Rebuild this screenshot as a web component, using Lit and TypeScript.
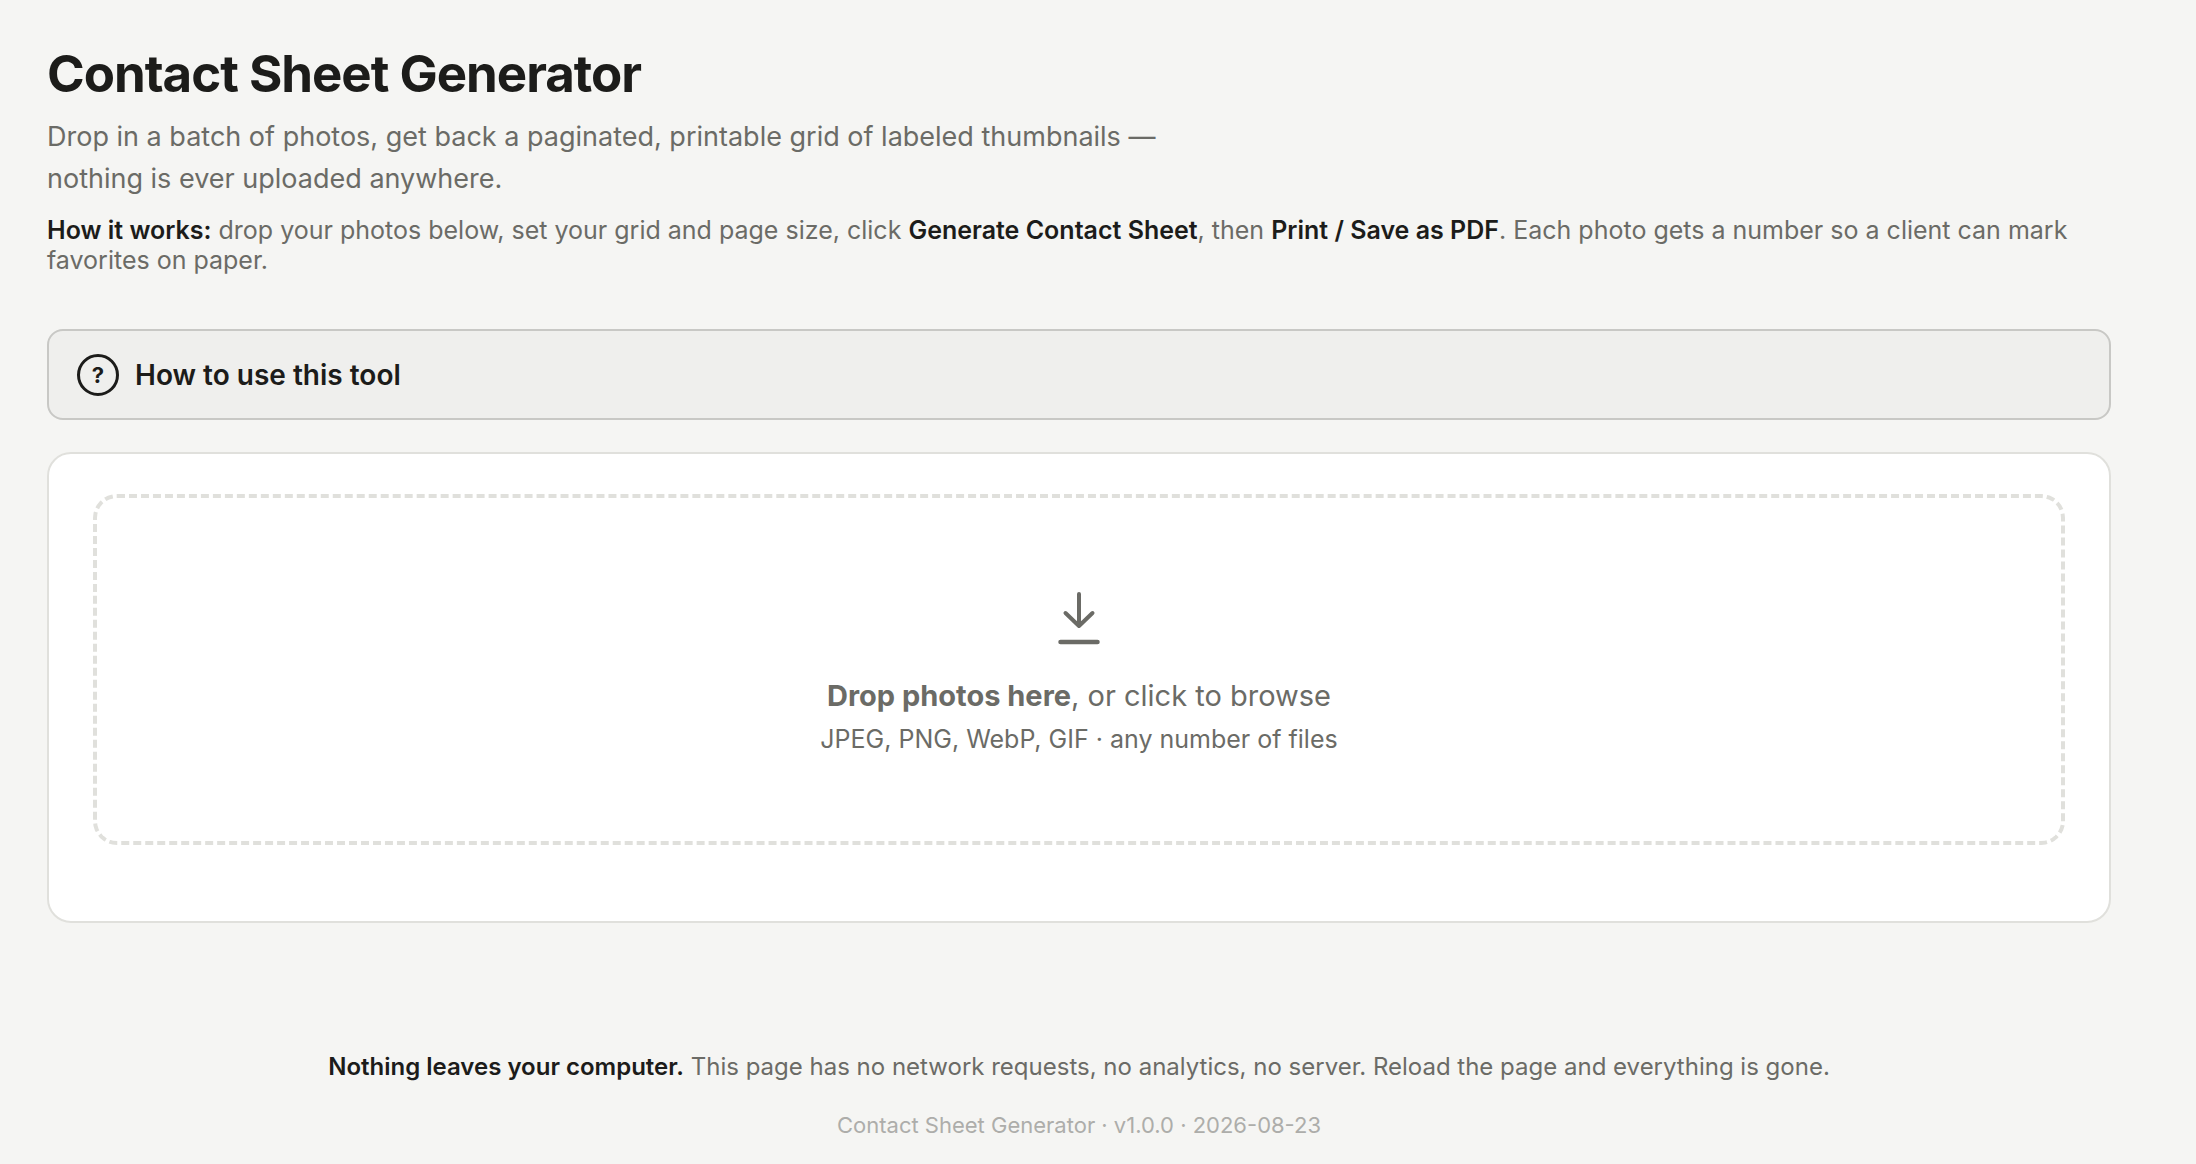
import { LitElement, html, css } from "lit";
import { customElement, state } from "lit/decorators.js";

@customElement("drop-zone")
class DropZone extends LitElement {
  @state() private count = 0;

  static styles = css`
    :host {
      display: block;
    }
    .zone {
      display: flex;
      flex-direction: column;
      align-items: center;
      box-sizing: border-box;
      padding: 90px 40px 81px;
      border: 4px dashed #e0e0dc;
      border-radius: 24px;
      color: #6b6b66;
      text-align: center;
      cursor: pointer;
    }
    .zone:focus-within {
      border-color: #6b6b66;
    }
    .file {
      position: absolute;
      width: 1px;
      height: 1px;
      opacity: 0;
      overflow: hidden;
      clip-path: inset(50%);
    }
    .icon {
      display: block;
      width: 48px;
      height: 60px;
      margin-bottom: 26px;
    }
    .prompt {
      font-size: 29px;
      line-height: 44px;
    }
    .prompt strong {
      font-weight: 700;
    }
    .hint {
      font-size: 25px;
      line-height: 42px;
    }
  `;

  private onChange(e: Event) {
    this.count = (e.target as HTMLInputElement).files?.length ?? 0;
  }

  render() {
    return html`
      <label class="zone" for="photos">
        <input
          class="file"
          id="photos"
          type="file"
          accept="image/*"
          multiple
          @change=${this.onChange}
        />
        <svg
          class="icon"
          viewBox="0 0 48 60"
          fill="none"
          stroke="currentColor"
          stroke-width="4"
          stroke-linecap="round"
          stroke-linejoin="round"
          aria-hidden="true"
        >
          <path d="M24 6v32M10.500 25l13.500 13 13.500-13" />
          <path d="M5.500 54h37" stroke-width="4.500" />
        </svg>
        <span class="prompt"
          ><strong>Drop photos here</strong>, or click to browse</span
        >
        <span class="hint"
          >${this.count
            ? `${this.count} selected`
            : "JPEG, PNG, WebP, GIF · any number of files"}</span
        >
      </label>
    `;
  }
}

@customElement("app-root")
class AppRoot extends LitElement {
  static styles = css`
    :host {
      display: block;
      box-sizing: border-box;
      min-height: 100vh;
      padding: 44px 85px 16px 47px;
      background: #f5f5f3;
      color: #1c1c1a;
      font-family: Inter, "Liberation Sans", sans-serif;
    }
    .title {
      margin: 0;
      font-size: 51px;
      line-height: 60px;
      font-weight: 700;
      letter-spacing: -0.02em;
    }
    .lead {
      max-width: 1160px;
      margin: 12px 0 0;
      color: #6b6b66;
      font-size: 27px;
      line-height: 42px;
    }
    .how {
      margin: 15px 0 0;
      color: #6b6b66;
      font-size: 25px;
      line-height: 30px;
    }
    .how strong,
    .note strong {
      color: #1c1c1a;
      font-weight: 600;
    }
    .help {
      margin-top: 54px;
      border: 2px solid #c8c8c5;
      border-radius: 16px;
      background: #efefed;
    }
    .summary {
      display: flex;
      align-items: center;
      gap: 16px;
      padding: 23px 28px 22px;
      font-size: 28px;
      line-height: 42px;
      font-weight: 600;
      list-style: none;
      cursor: pointer;
    }
    .summary::-webkit-details-marker {
      display: none;
    }
    .badge {
      display: flex;
      align-items: center;
      justify-content: center;
      box-sizing: border-box;
      width: 42px;
      height: 42px;
      border: 3px solid #1c1c1a;
      border-radius: 50%;
      font-size: 22px;
      line-height: 36px;
      font-weight: 700;
    }
    .card {
      margin-top: 32px;
      padding: 40px 44px 76px;
      border: 2px solid #e0e0dc;
      border-radius: 24px;
      background: #fff;
    }
    .footer {
      margin-top: 125px;
      text-align: center;
    }
    .note {
      margin: 0;
      color: #6b6b66;
      font-size: 24px;
      line-height: 38px;
    }
    .version {
      margin: 21px 0 0;
      color: #adadaa;
      font-size: 22px;
      line-height: 36px;
    }
  `;

  render() {
    return html`
      <header>
        <h1 class="title">Contact Sheet Generator</h1>
        <p class="lead">
          Drop in a batch of photos, get back a paginated, printable grid of
          labeled thumbnails — nothing is ever uploaded anywhere.
        </p>
        <p class="how">
          <strong>How it works:</strong> drop your photos below, set your grid
          and page size, click <strong>Generate Contact Sheet</strong>, then
          <strong>Print / Save as PDF</strong>. Each photo gets a number so a
          client can mark favorites on paper.
        </p>
      </header>
      <main>
        <details class="help">
          <summary class="summary">
            <span class="badge" aria-hidden="true">?</span>
            <span>How to use this tool</span>
          </summary>
        </details>
        <section class="card">
          <drop-zone></drop-zone>
        </section>
      </main>
      <footer class="footer">
        <p class="note">
          <strong>Nothing leaves your computer.</strong> This page has no
          network requests, no analytics, no server. Reload the page and
          everything is gone.
        </p>
        <p class="version">Contact Sheet Generator · v1.0.0 · 2026-08-23</p>
      </footer>
    `;
  }
}
